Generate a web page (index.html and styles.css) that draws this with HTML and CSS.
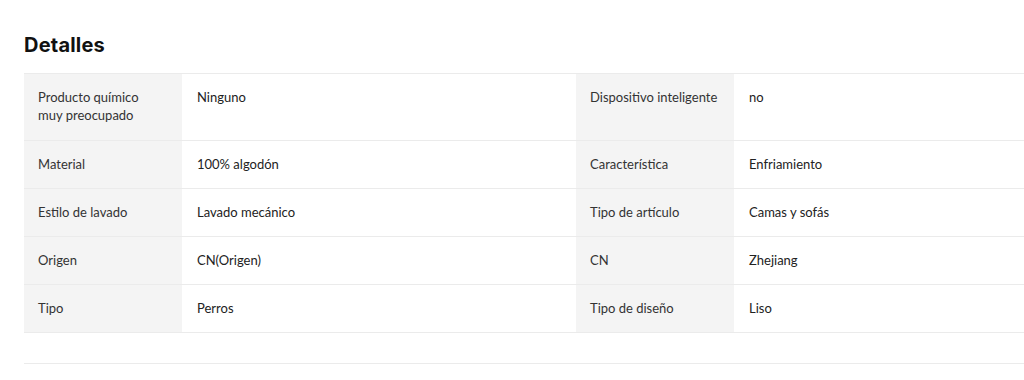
FILE: index.html
```html
<!DOCTYPE html>
<html lang="es">
<head>
<meta charset="utf-8">
<title>Detalles</title>
<link rel="stylesheet" href="styles.css">
</head>
<body>
<section class="details">
  <h2 class="details-title">Detalles</h2>
  <table class="spec-table">
    <tbody>
      <tr>
        <th>Producto químico muy preocupado</th>
        <td>Ninguno</td>
        <th>Dispositivo inteligente</th>
        <td>no</td>
      </tr>
      <tr>
        <th>Material</th>
        <td>100% algodón</td>
        <th>Característica</th>
        <td>Enfriamiento</td>
      </tr>
      <tr>
        <th>Estilo de lavado</th>
        <td>Lavado mecánico</td>
        <th>Tipo de artículo</th>
        <td>Camas y sofás</td>
      </tr>
      <tr>
        <th>Origen</th>
        <td>CN(Origen)</td>
        <th>CN</th>
        <td>Zhejiang</td>
      </tr>
      <tr>
        <th>Tipo</th>
        <td>Perros</td>
        <th>Tipo de diseño</th>
        <td>Liso</td>
      </tr>
    </tbody>
  </table>
  <div class="divider"></div>
</section>
</body>
</html>
```

FILE: styles.css
```css
html, body {
  margin: 0;
  padding: 0;
  background: #fff;
  overflow: hidden;
}
body {
  font-family: Lato, "Noto Sans", sans-serif;
  color: #222;
}
.details {
  padding: 33px 0 0 24px;
  width: 1104px;
}
.details-title {
  margin: 0 0 16px;
  font-family: Inter, Lato, sans-serif;
  font-size: 20px;
  line-height: 24px;
  font-weight: 700;
  letter-spacing: 0.2px;
  color: #111;
}
.spec-table {
  width: 1104px;
  border-collapse: collapse;
  table-layout: fixed;
  font-size: 13px;
  line-height: 18px;
}
.spec-table th,
.spec-table td {
  text-align: left;
  vertical-align: top;
  font-weight: 400;
  padding: 14px 14px 15px 14px;
  border-top: 1px solid #ebebeb;
  border-bottom: 1px solid #ebebeb;
}
.spec-table tr:first-child th {
  padding-bottom: 16px;
}
.spec-table th {
  width: 128px;
  padding-right: 16px;
  background: #f4f4f4;
  color: #333;
}
.spec-table td {
  width: 365px;
  padding-left: 15px;
  color: #222;
}
.divider {
  margin-top: 30px;
  border-top: 1px solid #ebebeb;
}
```
